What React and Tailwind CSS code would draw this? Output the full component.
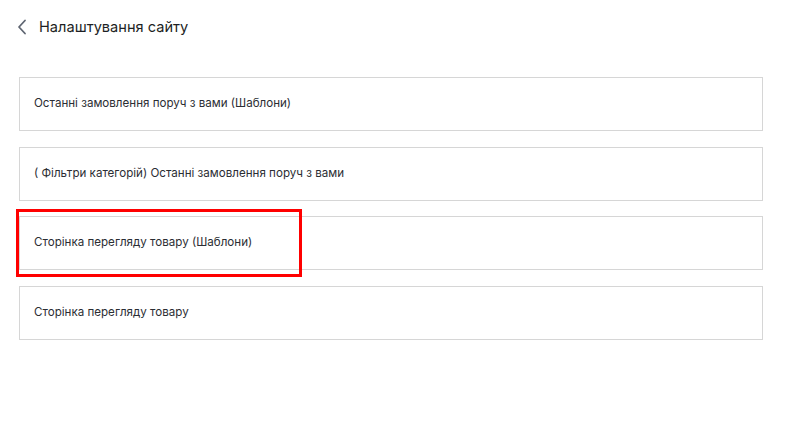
import React from "react";

const items = [
  "Останні замовлення поруч з вами (Шаблони)",
  "( Фільтри категорій) Останні замовлення поруч з вами",
  "Сторінка перегляду товару (Шаблони)",
  "Сторінка перегляду товару",
];

export default function App() {
  return (
    <div
      className="relative min-h-screen bg-white"
      style={{ fontFamily: "Inter, 'Noto Sans', sans-serif" }}
    >
      <div className="flex items-center gap-[12px] pl-[17px] pt-[8px] h-[38px] box-content">
        <svg width="10" height="16" viewBox="0 0 10 16" fill="none">
          <path
            d="M8 1.5 L2 8 L8 14.5"
            stroke="#5f6672"
            strokeWidth="1.8"
            strokeLinecap="round"
            strokeLinejoin="round"
          />
        </svg>
        <h1 className="text-[14.6px] text-[#1d1f24] leading-none">
          Налаштування сайту
        </h1>
      </div>

      <div className="flex flex-col gap-[15.6px] pl-[19px] pt-[31px] w-[763px]">
        {items.map((t) => (
          <div
            key={t}
            className="h-[54px] border border-[#d6d6d6] flex items-center pl-[14px] text-[11.6px] text-[#2b2d33]"
          >
            {t}
          </div>
        ))}
      </div>

      {/* annotation highlight */}
      <div className="absolute left-[16px] top-[209px] w-[286px] h-[68px] border-[3px] border-[#ff0000] pointer-events-none" />
    </div>
  );
}
